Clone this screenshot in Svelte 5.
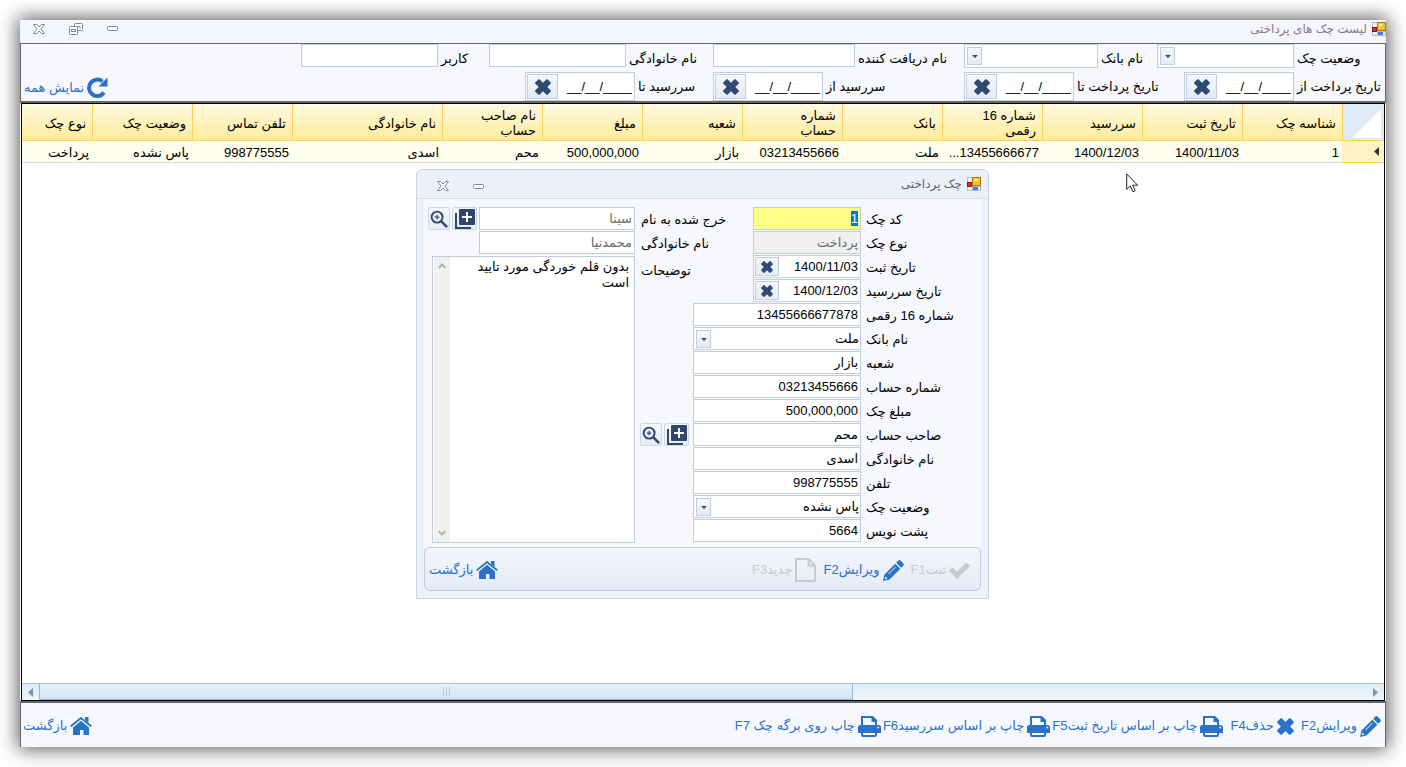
<script lang="ts">
	import { onMount } from 'svelte';

	type Field = {
		id: string;
		label: string;
		value: string;
		kind: 'text' | 'date' | 'select' | 'code' | 'locked';
	};

	const topFilters = [
		{ id: 'status', label: 'وضعیت چک', size: 'status', select: true },
		{ id: 'bank', label: 'نام بانک', size: 'bank', select: true },
		{ id: 'receiver', label: 'نام دریافت کننده', size: 'receiver', select: false },
		{ id: 'family', label: 'نام خانوادگی', size: 'family', select: false },
		{ id: 'user', label: 'کاربر', size: 'user', select: false }
	];

	const dateFilters = [
		{ id: 'paid-from', label: 'تاریخ پرداخت از', size: 'paid-from' },
		{ id: 'paid-to', label: 'تاریخ پرداخت تا', size: 'paid-to' },
		{ id: 'due-from', label: 'سررسید از', size: 'due-from' },
		{ id: 'due-to', label: 'سررسید تا', size: 'due-to' }
	];

	const columns = [
		{ title: 'شناسه چک', value: '1' },
		{ title: 'تاریخ ثبت', value: '1400/11/03' },
		{ title: 'سررسید', value: '1400/12/03' },
		{ title: 'شماره 16\nرقمی', value: '13455666677...' },
		{ title: 'بانک', value: 'ملت' },
		{ title: 'شماره\nحساب', value: '03213455666' },
		{ title: 'شعبه', value: 'بازار' },
		{ title: 'مبلغ', value: '500,000,000' },
		{ title: 'نام صاحب\nحساب', value: 'محم' },
		{ title: 'نام خانوادگی', value: 'اسدی', size: 'wide' },
		{ title: 'تلفن تماس', value: '998775555' },
		{ title: 'وضعیت چک', value: 'پاس نشده' },
		{ title: 'نوع چک', value: 'پرداخت', size: 'rest' }
	];

	const fields: Field[] = [
		{ id: 'code', label: 'کد چک', value: '1', kind: 'code' },
		{ id: 'type', label: 'نوع چک', value: 'پرداخت', kind: 'locked' },
		{ id: 'created', label: 'تاریخ ثبت', value: '1400/11/03', kind: 'date' },
		{ id: 'due', label: 'تاریخ سررسید', value: '1400/12/03', kind: 'date' },
		{ id: 'number', label: 'شماره 16 رقمی', value: '13455666677878', kind: 'text' },
		{ id: 'bank-name', label: 'نام بانک', value: 'ملت', kind: 'select' },
		{ id: 'branch', label: 'شعبه', value: 'بازار', kind: 'text' },
		{ id: 'account', label: 'شماره حساب', value: '03213455666', kind: 'text' },
		{ id: 'amount', label: 'مبلغ چک', value: '500,000,000', kind: 'text' },
		{ id: 'owner', label: 'صاحب حساب', value: 'محم', kind: 'text' },
		{ id: 'owner-family', label: 'نام خانوادگی', value: 'اسدی', kind: 'text' },
		{ id: 'phone', label: 'تلفن', value: '998775555', kind: 'text' },
		{ id: 'state', label: 'وضعیت چک', value: 'پاس نشده', kind: 'select' },
		{ id: 'back', label: 'پشت نویس', value: '5664', kind: 'text' }
	];

	let form: HTMLFormElement;

	onMount(() => {
		const code = form.querySelector<HTMLInputElement>('#code');
		code?.focus();
		code?.select();
	});
</script>

{#snippet appIcon()}
	<svg width="14" height="14" viewBox="0 0 14 14" aria-hidden="true">
		<rect width="14" height="14" fill="#b9bcc2" />
		<path d="M1 1h4v4H1zM1 10h4v3H1zM6 10h7v3H6z" fill="#eef1f5" />
		<rect x="5.500" y=".5" width="8" height="8" fill="#f5c431" stroke="#a8780c" />
		<path d="M7 2h4v2H7z" fill="#fdea9a" />
		<rect x=".5" y="5.500" width="4" height="4" fill="#d9302a" stroke="#8e1613" />
		<rect x="6" y="10" width="5" height="3" fill="#3f7be0" />
	</svg>
{/snippet}

{#snippet closeIcon()}
	<svg width="12" height="10" viewBox="0 0 12 10" aria-hidden="true">
		<path d="M.5.5h3L6 3 8.500.5h3L8 5l3.500 4.500h-3L6 7 3.500 9.500h-3L4 5z" fill="#fff" stroke="#8087a0" />
	</svg>
{/snippet}

{#snippet minimizeIcon()}
	<svg width="11" height="5" viewBox="0 0 11 5" aria-hidden="true">
		<rect x=".5" y=".5" width="10" height="4" rx="1" fill="#fff" stroke="#8087a0" />
	</svg>
{/snippet}

{#snippet crossIcon(size: number)}
	<svg width={size} height={size} viewBox="0 0 16 16" aria-hidden="true">
		<path
			d="M4.700.4 8 3.700 11.300.4a1 1 0 0 1 1.400 0l2.900 2.900a1 1 0 0 1 0 1.400L12.300 8l3.300 3.300a1 1 0 0 1 0 1.400l-2.900 2.900a1 1 0 0 1-1.400 0L8 12.300l-3.300 3.300a1 1 0 0 1-1.400 0L.4 12.700a1 1 0 0 1 0-1.400L3.700 8 .4 4.700a1 1 0 0 1 0-1.400L3.300.4a1 1 0 0 1 1.400 0z"
			fill="currentColor"
		/>
	</svg>
{/snippet}

{#snippet pencilIcon()}
	<svg width="21" height="21" viewBox="0 0 21 21" aria-hidden="true">
		<path d="M13.200 2.800 15.400.6a1.600 1.600 0 0 1 2.200 0l2.800 2.800a1.600 1.600 0 0 1 0 2.200l-2.200 2.200z" fill="currentColor" />
		<path d="m12.300 3.700 5 5L6.500 19.500 0 21l1.500-6.500z" fill="currentColor" />
		<path d="M5.500 14 12.500 7" stroke="#f4f7fc" stroke-width="1" />
		<path d="m2.400 16.500 2.100 2.100-2.700.6z" fill="#f4f7fc" />
	</svg>
{/snippet}

{#snippet printIcon()}
	<svg width="23" height="21" viewBox="0 0 23 21" aria-hidden="true">
		<path d="M4 10V1h10.500L18 4.500V10" fill="#f7f9fd" stroke="currentColor" stroke-width="2" />
		<path d="M13.500 1v5H19V4.500L15 .5z" fill="currentColor" />
		<path d="M2.500 9h18A2.500 2.500 0 0 1 23 11.500V17H0v-5.500A2.500 2.500 0 0 1 2.500 9z" fill="currentColor" />
		<rect x="4" y="16" width="14" height="4" rx="1" fill="#f7f9fd" stroke="currentColor" stroke-width="2" />
		<circle cx="20.200" cy="11.500" r="1" fill="#f7f9fd" />
	</svg>
{/snippet}

{#snippet homeIcon()}
	<svg width="22" height="18" viewBox="0 0 22 18" aria-hidden="true">
		<path d="M11 3.800 19 10.500V18h-5.500v-5h-3.500v5H3v-7.500z" fill="currentColor" />
		<path d="M.8 9.300 11 .8l10.200 8.500" fill="none" stroke="#f7f8fd" stroke-width="3.600" />
		<path d="M.8 9.300 11 1l10.200 8.300" fill="none" stroke="currentColor" stroke-width="1.800" />
		<path d="M15 0h3.500v6L15 3z" fill="currentColor" />
	</svg>
{/snippet}

{#snippet zoomIcon()}
	<svg width="18" height="18" viewBox="0 0 19 19" fill="none" stroke="currentColor" aria-hidden="true">
		<circle cx="7.500" cy="7.500" r="5.800" stroke-width="2" />
		<path d="m12 12 6 6" stroke-width="2.600" />
		<path d="M7.500 5v5M5 7.500h5" stroke-width="1.200" />
	</svg>
{/snippet}

{#snippet addIcon()}
	<svg width="20" height="20" viewBox="0 0 20 20" fill="none" aria-hidden="true">
		<rect x="4" width="16" height="16" rx="1" fill="currentColor" />
		<path d="M1 4v15h15" stroke="currentColor" stroke-width="2" />
		<path d="M12 3v10M7 8h10" stroke="#fff" stroke-width="2" />
	</svg>
{/snippet}

{#snippet dropDown(id: string, value: string)}
	<div class="combo">
		<select {id}>
			<option>{value}</option>
		</select>
		<span class="arrow" aria-hidden="true"></span>
	</div>
{/snippet}

<main class="window" dir="rtl">
	<header class="title-bar">
		<h1>{@render appIcon()}لیست چک های پرداختی</h1>
		<div class="window-buttons">
			<button type="button" aria-label="کوچک کردن">{@render minimizeIcon()}</button>
			<button type="button" aria-label="بازگردانی">
				<svg width="14" height="12" viewBox="0 0 14 12" aria-hidden="true">
					<rect x="5.500" y=".5" width="8" height="7" rx="1" fill="#fff" stroke="#8087a0" />
					<path d="M8 3.500h3v2" fill="none" stroke="#8087a0" />
					<rect x=".5" y="3.500" width="8" height="8" rx="1" fill="#fff" stroke="#8087a0" />
					<rect x="2.500" y="6.500" width="4" height="2" fill="none" stroke="#8087a0" />
				</svg>
			</button>
			<button type="button" aria-label="بستن">{@render closeIcon()}</button>
		</div>
	</header>

	<section class="filters">
		<div class="filter-row">
			{#each topFilters as filter}
				<div class="filter {filter.size}">
					<label for={filter.id}>{filter.label}</label>
					{#if filter.select}
						{@render dropDown(filter.id, '')}
					{:else}
						<input id={filter.id} type="text" />
					{/if}
				</div>
			{/each}
		</div>
		<div class="filter-row dates">
			{#each dateFilters as filter}
				<div class="filter {filter.size}">
					<label for={filter.id}>{filter.label}</label>
					<div class="date-box">
						<input id={filter.id} type="text" value="____/__/__" />
						<button type="button" aria-label="پاک کردن">{@render crossIcon(16)}</button>
					</div>
				</div>
			{/each}
			<button class="command show-all" type="button">
				<svg width="21" height="21" viewBox="0 0 21 21" aria-hidden="true">
					<path d="M17 15.500A8.200 8.200 0 1 1 15.500 4.500" fill="none" stroke="currentColor" stroke-width="4" />
					<path d="M20.500.5v9h-9z" fill="currentColor" />
				</svg>
				نمایش همه
			</button>
		</div>
	</section>

	<section class="grid">
		<table>
			<colgroup>
				<col class="corner-col" />
				{#each columns as column}
					<col class={column.size} />
				{/each}
			</colgroup>
			<thead>
				<tr>
					<th class="corner" aria-label="انتخاب">
						<svg width="29" height="29" viewBox="0 0 29 29" aria-hidden="true">
							<path d="M29 0v29H0z" fill="#fff" />
						</svg>
					</th>
					{#each columns as column}
						<th>{column.title}</th>
					{/each}
				</tr>
			</thead>
			<tbody>
				<tr>
					<td class="marker">
						<svg width="5" height="9" viewBox="0 0 5 9" aria-hidden="true">
							<path d="M5 0v9L0 4.500z" fill="#333" />
						</svg>
					</td>
					{#each columns as column}
						<td>{column.value}</td>
					{/each}
				</tr>
			</tbody>
		</table>

		<svg class="pointer" width="13" height="20" viewBox="0 0 13 20" aria-hidden="true">
			<path d="M.7.9v15.500l3.600-3.400 2.600 5.800 2.300-1-2.600-5.600h5z" fill="#fff" stroke="#222" />
		</svg>

		<div class="scroll-bar">
			<button type="button" aria-label="راست">
				<svg width="5" height="9" viewBox="0 0 5 9" aria-hidden="true"><path d="M0 0v9l5-4.500z" /></svg>
			</button>
			<div class="track">
				<div class="thumb"><i></i><i></i><i></i></div>
			</div>
			<button type="button" aria-label="چپ">
				<svg width="5" height="9" viewBox="0 0 5 9" aria-hidden="true"><path d="M5 0v9L0 4.500z" /></svg>
			</button>
		</div>

		<section class="dialog" role="dialog" aria-labelledby="dialog-title">
			<header class="dialog-title">
				<h2 id="dialog-title">{@render appIcon()}چک پرداختی</h2>
				<div class="window-buttons">
					<button type="button" aria-label="کوچک کردن">{@render minimizeIcon()}</button>
					<button type="button" aria-label="بستن">{@render closeIcon()}</button>
				</div>
			</header>

			<form bind:this={form}>
				{#each fields as field, i}
					<label class="main-label" for={field.id} style:grid-row={i + 1}>{field.label}</label>
					<div class="main-field {field.kind}" style:grid-row={i + 1}>
						{#if field.kind === 'select'}
							{@render dropDown(field.id, field.value)}
						{:else if field.kind === 'date'}
							<div class="date-box">
								<input id={field.id} type="text" value={field.value} />
								<button type="button" aria-label="پاک کردن">{@render crossIcon(12)}</button>
							</div>
						{:else}
							<input id={field.id} type="text" value={field.value} disabled={field.kind === 'locked'} />
						{/if}
					</div>
				{/each}

				<div class="tools owner-tools">
					<button type="button" aria-label="افزودن صاحب حساب">{@render addIcon()}</button>
					<button type="button" aria-label="جستجوی صاحب حساب">{@render zoomIcon()}</button>
				</div>

				<label class="side-label first" for="payee">خرج شده به نام</label>
				<input class="side-field first" id="payee" type="text" value="سینا" readonly />
				<div class="tools payee-tools">
					<button type="button" aria-label="افزودن شخص">{@render addIcon()}</button>
					<button type="button" aria-label="جستجوی شخص">{@render zoomIcon()}</button>
				</div>
				<label class="side-label second" for="payee-family">نام خانوادگی</label>
				<input class="side-field second" id="payee-family" type="text" value="محمدنیا" readonly />

				<label class="side-label third" for="notes">توضیحات</label>
				<div class="notes">
					<textarea id="notes">بدون قلم خوردگی مورد تایید است</textarea>
					<div class="notes-scroll" aria-hidden="true">
						<svg width="8" height="6" viewBox="0 0 8 6"><path d="m.7 5 3.300-3.500L7.300 5" /></svg>
						<svg width="8" height="6" viewBox="0 0 8 6"><path d="m.7 1 3.300 3.500L7.300 1" /></svg>
					</div>
				</div>
			</form>

			<footer class="dialog-bar">
				<button class="command" type="button" disabled>
					<svg width="21" height="17" viewBox="0 0 21 17" aria-hidden="true">
						<path d="m0 9 3.500-3.500 4.500 4.200L17.500.5 21 4 8 17z" fill="currentColor" />
					</svg>
					ثبتF1
				</button>
				<button class="command" type="button">{@render pencilIcon()}ویرایشF2</button>
				<button class="command" type="button" disabled>
					<svg width="21" height="24" viewBox="0 0 21 24" fill="none" stroke="currentColor" stroke-width="2" aria-hidden="true">
						<path d="M1 1h12.500L20 7.500V23H1zM13.500 1v6.500H20" />
					</svg>
					جدیدF3
				</button>
				<button class="command last" type="button">{@render homeIcon()}بازگشت</button>
			</footer>
		</section>
	</section>

	<footer class="command-bar">
		<button class="command" type="button">{@render pencilIcon()}ویرایشF2</button>
		<button class="command delete" type="button">{@render crossIcon(17)}حذفF4</button>
		<button class="command" type="button">{@render printIcon()}چاپ بر اساس تاریخ ثبتF5</button>
		<button class="command" type="button">{@render printIcon()}چاپ بر اساس سررسیدF6</button>
		<button class="command" type="button">{@render printIcon()}چاپ روی برگه چک F7</button>
		<button class="command last" type="button">{@render homeIcon()}بازگشت</button>
	</footer>
</main>

<style>
	:global(body) {
		margin: 0;
		background: #fff;
	}

	* {
		box-sizing: border-box;
	}

	.window {
		display: flex;
		flex-direction: column;
		height: calc(100vh - 40px);
		margin: 20px;
		background: #f7f8fd;
		box-shadow: 0 0 18px 2px rgba(0, 0, 0, 0.65);
		color: #000;
		font-family: 'Liberation Sans', 'DejaVu Sans', sans-serif;
		font-size: 13px;
		line-height: 16px;
	}

	button,
	input,
	select,
	textarea {
		margin: 0;
		padding: 0;
		border: 0;
		border-radius: 0;
		outline: 0;
		background: none;
		color: inherit;
		font: inherit;
	}

	svg {
		display: block;
		flex: none;
	}

	h1,
	h2 {
		display: flex;
		align-items: center;
		gap: 5px;
		margin: 0;
		color: #8c7396;
		font-size: 12px;
		font-weight: 400;
	}

	.title-bar {
		display: flex;
		justify-content: space-between;
		height: 24px;
		padding: 0 0 6px 13px;
		border-bottom: 1px solid #666;
		background: #f3f6fc;
	}

	.window-buttons {
		display: flex;
		align-items: center;
		gap: 24px;
	}

	.window-buttons button {
		display: flex;
	}

	.filters {
		border: solid #666;
		border-width: 0 1px 2px;
	}

	.filter-row {
		display: flex;
		height: 28px;
	}

	.filter-row.dates {
		height: 29px;
	}

	.filter {
		display: flex;
		flex: none;
		justify-content: flex-end;
		gap: 3px;
		white-space: nowrap;
	}

	.filter label {
		padding-top: 7px;
	}

	.filter > input,
	.date-box,
	.combo select,
	.main-field > input,
	.side-field {
		border: 1px solid #c1cddd;
		background: #fff;
	}

	.filter > input {
		height: 23px;
	}

	.filter .combo {
		height: 24px;
	}

	.status {
		width: 228px;
	}

	.bank {
		width: 193px;
	}

	.receiver,
	.due-from {
		width: 251px;
	}

	.family {
		width: 224px;
	}

	.user,
	.due-to {
		width: 188px;
	}

	.paid-from {
		width: 201px;
	}

	.paid-to {
		width: 220px;
	}

	.filter > input,
	.filter .combo {
		width: 137px;
	}

	.filter.bank .combo {
		width: 134px;
	}

	.filter.receiver > input {
		width: 142px;
	}

	.combo {
		position: relative;
		height: 100%;
	}

	.combo select {
		width: 100%;
		height: 100%;
		padding: 0 1px 0 20px;
		appearance: none;
	}

	.arrow {
		position: absolute;
		top: 3px;
		left: 3px;
		display: grid;
		place-items: center;
		width: 15px;
		height: 18px;
		border: 1px solid #c1cddd;
		background: linear-gradient(#f4f8fc, #e4ebf6);
		pointer-events: none;
	}

	.arrow::after {
		border: solid transparent;
		border-width: 3px 3px 0;
		border-top-color: #34496b;
		content: '';
	}

	.date-box {
		display: flex;
		width: 110px;
		height: 29px;
		padding: 1px;
	}

	.date-box input {
		flex: 1;
		min-width: 0;
		padding: 0 1px;
	}

	.date-box button {
		display: grid;
		place-items: center;
		width: 31px;
		border: 1px solid #c1cddd;
		background: linear-gradient(#f4f8fc, #e4ebf6);
		color: #2f4a70;
	}

	.command {
		display: flex;
		align-items: center;
		gap: 3px;
		color: #2a71ca;
		white-space: nowrap;
	}

	.command:disabled {
		color: #c9cacc;
	}

	.show-all {
		margin: 2px auto 0 3px;
	}

	.grid {
		position: relative;
		display: flex;
		flex: 1;
		flex-direction: column;
		margin: 0 1px;
		border: 1px solid #000;
		background: #fff;
	}

	table {
		width: 100%;
		table-layout: fixed;
		border-collapse: separate;
		border-spacing: 0;
	}

	col {
		width: 100px;
	}

	.corner-col {
		width: 42px;
	}

	.wide {
		width: 150px;
	}

	.rest {
		width: auto;
	}

	th,
	td {
		overflow: hidden;
		padding: 2px 6px 0;
		text-align: right;
		font-weight: 400;
	}

	th {
		height: 37px;
		border-bottom: 1px solid #ffcf60;
		border-left: 1px solid #ffcf60;
		background: linear-gradient(#fff9e0, #ffec9a);
		line-height: 15px;
		white-space: pre-line;
	}

	th:last-child {
		border-left: 0;
	}

	td {
		height: 22px;
		padding: 2px 3px 0;
		border-bottom: 1px solid #ddd;
		background: #fffdeb;
		white-space: nowrap;
	}

	.corner {
		padding: 3px 3px 0;
		background: #deebf7;
	}

	.marker {
		padding: 0 5px;
		border-bottom-color: #ffcf60;
		background: #fff3c4;
	}

	.pointer {
		position: absolute;
		top: 69px;
		right: 245px;
	}

	.scroll-bar {
		display: flex;
		height: 17px;
		margin-top: auto;
		border-top: 1px solid #a9c3de;
		background: linear-gradient(#dfebf6, #edf6fd);
	}

	.scroll-bar button {
		display: grid;
		place-items: center;
		width: 17px;
	}

	.scroll-bar path {
		fill: #7d8fb5;
	}

	.track {
		display: flex;
		flex: 1;
		justify-content: flex-end;
	}

	.thumb {
		display: flex;
		align-items: center;
		justify-content: center;
		gap: 2px;
		width: 61.300%;
		border: solid #95b2d2;
		border-width: 0 1px 1px;
		background: linear-gradient(#e8f3fc, #d3e3f3);
	}

	.thumb i {
		width: 1px;
		height: 9px;
		background: #b9c6d4;
	}

	.dialog {
		position: absolute;
		top: 65px;
		right: 1px;
		left: 0;
		width: 573px;
		margin: 0 auto;
		padding: 0 7px 7px;
		border: 1px solid #c9d4e2;
		border-radius: 6px 6px 0 0;
		background: #eaf3fc;
	}

	.dialog-title {
		display: flex;
		justify-content: space-between;
		height: 29px;
		margin: 0 -7px;
		padding: 0 7px 0 20px;
		border-bottom: 1px solid #d3deeb;
		border-radius: 6px 6px 0 0;
		background: #ecf1f9;
	}

	.dialog-title h2 {
		color: #59637f;
	}

	.dialog-title .window-buttons {
		padding-top: 4px;
	}

	form {
		display: grid;
		grid-template-rows: repeat(14, 24px);
		grid-template-columns: 120px 108px 60px 58px 156px 1fr;
		padding: 8px 0 4px;
		background: #f7f8fd;
	}

	.main-label {
		grid-column: 1;
		padding: 5px 0 0 5px;
		text-align: left;
	}

	.main-field {
		grid-column: 2 / 4;
		padding-bottom: 1px;
	}

	.main-field > input {
		width: 100%;
		height: 100%;
		padding: 0 2px;
	}

	.main-field.code,
	.main-field.locked,
	.main-field.date {
		grid-column: 2;
	}

	.main-field.code input {
		background: #ff8;
	}

	.code input::selection {
		background: #0078d7;
		color: #fff;
	}

	.main-field.locked input {
		background: #f0f0f0;
		color: #6d6d6d;
	}

	.main-field .date-box {
		width: 100%;
		height: 100%;
	}

	.main-field .date-box button {
		width: 24px;
	}

	.side-label {
		grid-column: 3 / 5;
		padding: 5px 0 0 6px;
		text-align: left;
		white-space: nowrap;
	}

	.side-field {
		grid-column: 5;
		width: 100%;
		height: 23px;
		padding: 0 2px;
		color: #6d6d6d;
	}

	.first {
		grid-row: 1;
	}

	.second {
		grid-row: 2;
	}

	.third {
		grid-row: 3 / 5;
		padding-top: 8px;
	}

	.tools {
		display: flex;
		gap: 2px;
		height: 23px;
	}

	.tools button {
		display: grid;
		place-items: center;
		width: 25px;
		border: 1px solid #c9d6e6;
		border-radius: 2px;
		background: linear-gradient(#f4f8fc, #e6ecf6);
		color: #30466b;
	}

	.tools button + button {
		width: 22px;
	}

	.owner-tools {
		grid-row: 10;
		grid-column: 4;
		padding-right: 4px;
	}

	.payee-tools {
		grid-row: 1;
		grid-column: 6;
		padding-right: 2px;
	}

	.notes {
		display: flex;
		grid-row: 3 / 15;
		grid-column: 5 / 7;
		margin: 1px 0 0 8px;
		border: 1px solid #c1cddd;
		background: #fff;
	}

	.notes textarea {
		flex: 1;
		min-width: 0;
		padding: 2px 5px 0 20px;
		overflow: hidden;
		resize: none;
	}

	.notes-scroll {
		display: flex;
		flex-direction: column;
		align-items: center;
		justify-content: space-between;
		width: 17px;
		padding: 6px 0;
		border-left: 1px solid #fff;
		background: #f0f0f0;
	}

	.notes-scroll path {
		fill: none;
		stroke: #b4b4b4;
		stroke-width: 2;
	}

	.dialog-bar {
		display: flex;
		gap: 7px;
		height: 44px;
		padding: 2px 10px 0 4px;
		border: 1px solid #c1cddd;
		border-radius: 6px;
		background: linear-gradient(#f3f6fb, #e4eaf5);
	}

	.command-bar {
		display: flex;
		gap: 2px;
		height: 46px;
		padding: 2px 4px 0 2px;
		border: solid #666;
		border-width: 2px 1px 0;
	}

	.delete {
		margin: 0 5px;
	}

	.last {
		margin-right: auto;
	}
</style>
